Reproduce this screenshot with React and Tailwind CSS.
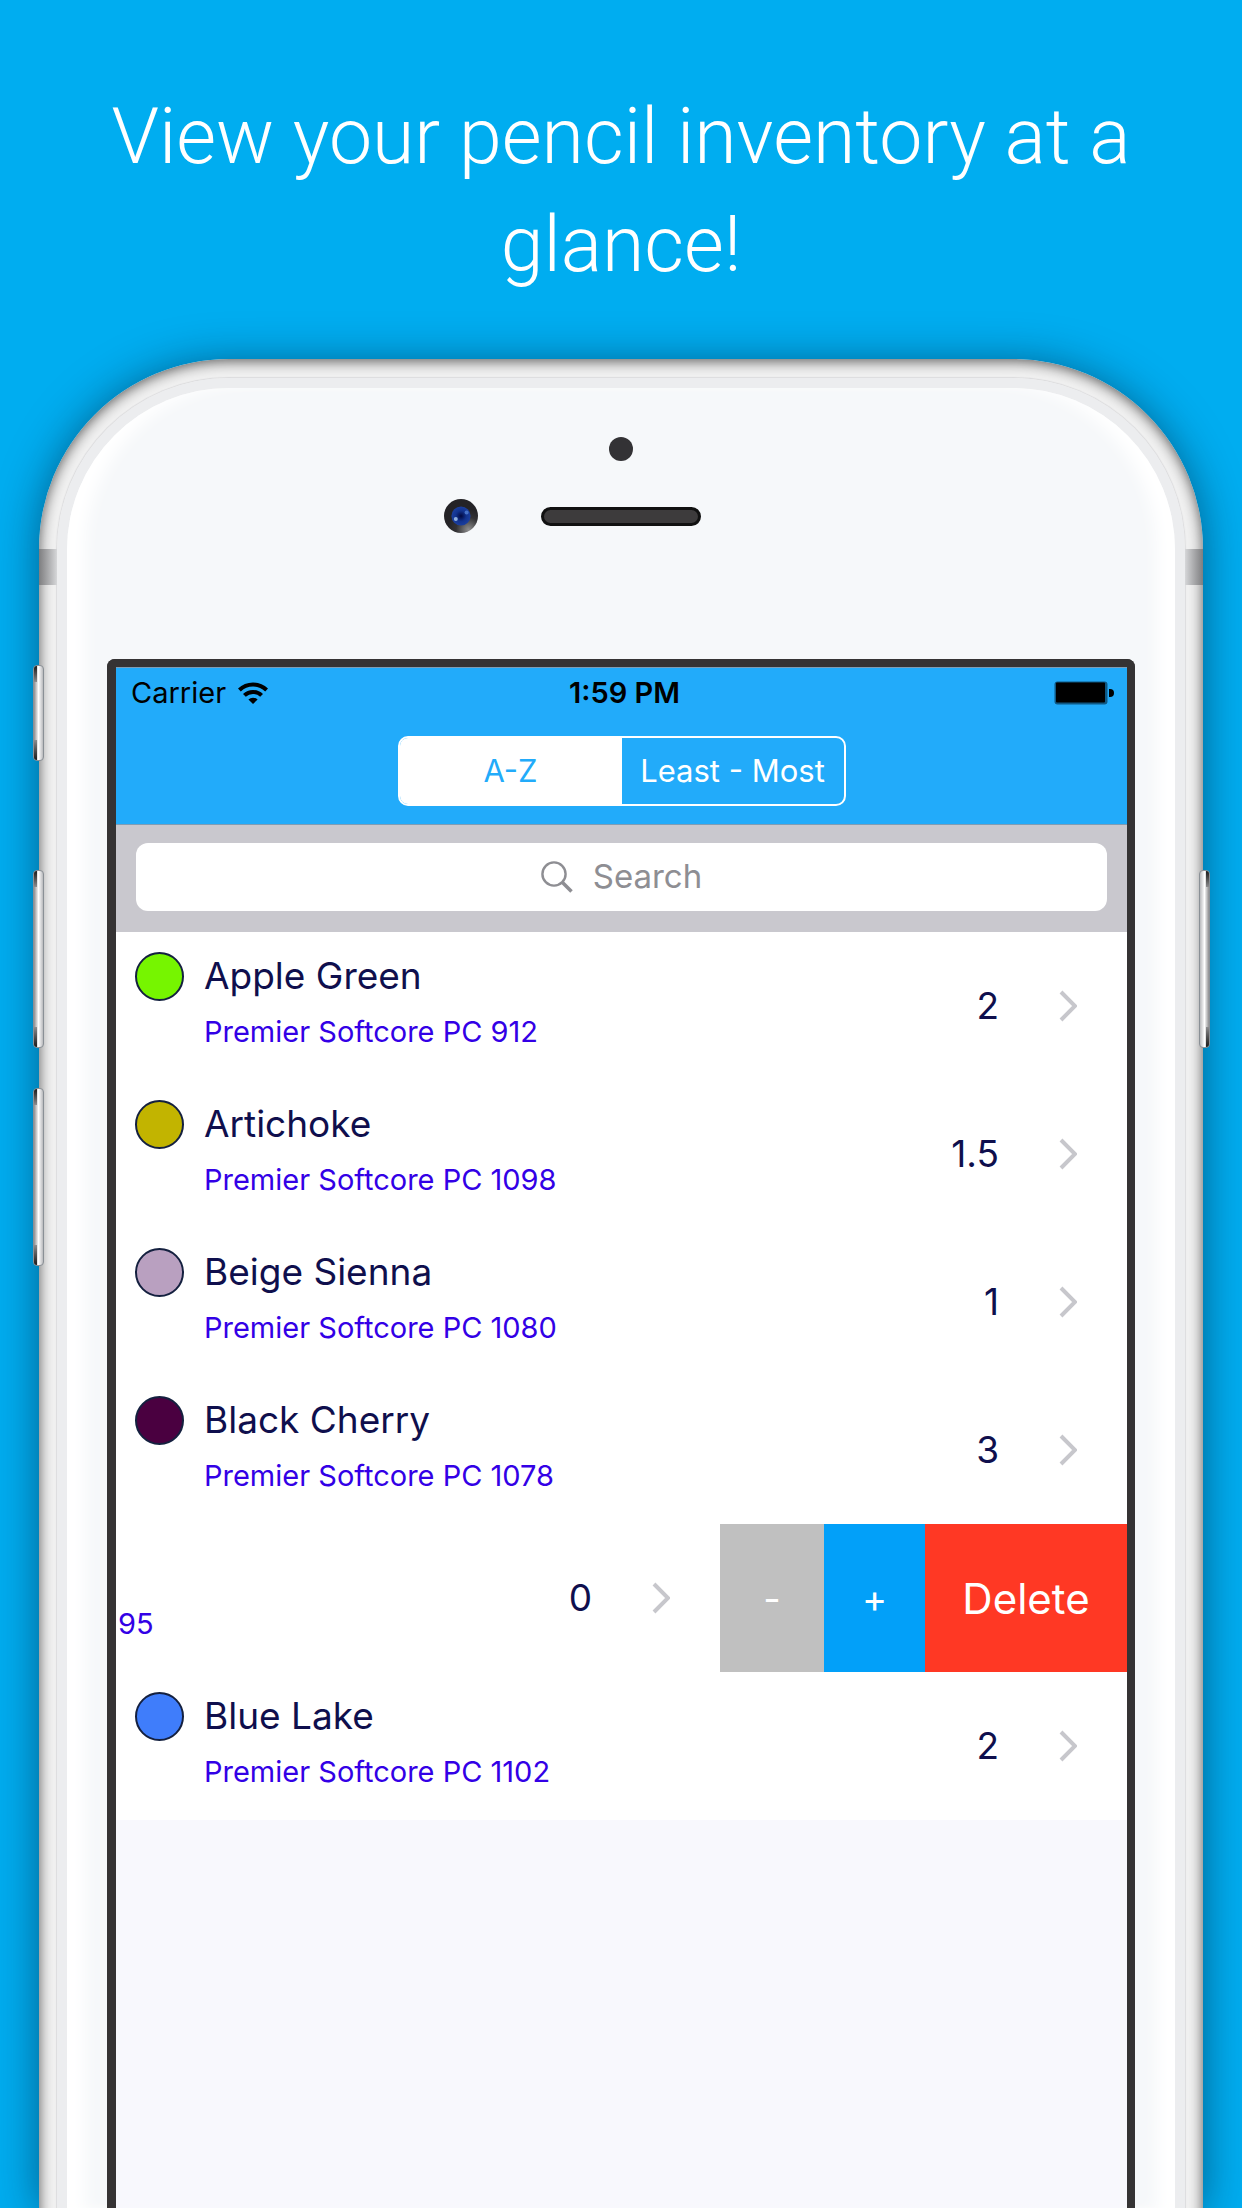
import React from "react";

const pencils = [
  { name: "Apple Green", detail: "Premier Softcore PC 912", count: "2", swatch: "bg-[#76f500]" },
  { name: "Artichoke", detail: "Premier Softcore PC 1098", count: "1.5", swatch: "bg-[#c2b400]" },
  { name: "Beige Sienna", detail: "Premier Softcore PC 1080", count: "1", swatch: "bg-[#b9a0c0]" },
  { name: "Black Cherry", detail: "Premier Softcore PC 1078", count: "3", swatch: "bg-[#4a0040]" },
  { detail: "95", count: "0", swiped: true },
  { name: "Blue Lake", detail: "Premier Softcore PC 1102", count: "2", swatch: "bg-[#3f7dfb]" },
];

function Chevron() {
  return (
    <svg aria-hidden="true" viewBox="0 0 18 32" className="h-8 w-[18px] shrink-0" fill="none" stroke="#c7c7cc" strokeWidth="4">
      <path d="M2 2 L16 16 L2 30" />
    </svg>
  );
}

function Wifi() {
  return (
    <svg aria-hidden="true" viewBox="0 0 30 22" className="h-[22px] w-[30px]">
      <g fill="none" stroke="#000" strokeWidth="4">
        <path d="M1.4 8 A19.5 19.5 0 0 1 28.6 8" />
        <path d="M6.4 13.4 A12.4 12.4 0 0 1 23.6 13.4" />
      </g>
      <path d="M15 22 L10.4 17.6 A6.6 6.6 0 0 1 19.6 17.6 Z" />
    </svg>
  );
}

function Battery() {
  return (
    <svg aria-hidden="true" viewBox="0 0 60 24" className="h-6 w-[60px]">
      <rect x="0.5" y="0.5" width="53" height="23" rx="3" fill="#0e5884" />
      <rect x="2" y="1.5" width="49" height="20" rx="1" />
      <path d="M55 8 h1 a4 4 0 0 1 0 8 h-1 z" />
    </svg>
  );
}

function SearchIcon() {
  return (
    <svg aria-hidden="true" viewBox="0 0 32 32" className="h-8 w-8 shrink-0" fill="none" stroke="#8e8e93">
      <circle cx="13" cy="13" r="11.6" strokeWidth="2.4" />
      <path d="M21 21 L30.5 30.5" strokeWidth="3.6" />
    </svg>
  );
}

function Camera() {
  return (
    <svg aria-hidden="true" viewBox="0 0 34 34" className="h-[34px] w-[34px]">
      <defs>
        <radialGradient id="rim" cx="0.72" cy="0.9" r="0.6">
          <stop offset="0" stopColor="#8f8f8f" />
          <stop offset="0.6" stopColor="#333235" />
          <stop offset="1" stopColor="#242326" />
        </radialGradient>
        <radialGradient id="lens" cx="0.5" cy="0.5" r="0.5">
          <stop offset="0" stopColor="#02093f" />
          <stop offset="0.55" stopColor="#12338f" />
          <stop offset="1" stopColor="#1b3f9f" />
        </radialGradient>
      </defs>
      <circle cx="17" cy="17" r="17" fill="url(#rim)" />
      <circle cx="17" cy="17" r="9.6" fill="url(#lens)" />
      <circle cx="11.8" cy="20" r="2" fill="#8fb0e0" />
      <circle cx="22.6" cy="13.4" r="2" fill="#4672c8" />
    </svg>
  );
}

function SideKey({ className }) {
  return (
    <div
      aria-hidden="true"
      className={`absolute w-[11px] overflow-hidden rounded-[4px] border border-[#8a9096] bg-linear-to-r from-[#8d8d8f] via-white to-[#b9babd] ${className}`}
    >
      <div className="flex h-full flex-col justify-between">
        <div className="h-4 w-[3px] bg-linear-to-b from-[#1c1c1c] to-[#8d8d8f]" />
        <div className="h-5 w-[3px] bg-linear-to-t from-[#1c1c1c] to-[#8d8d8f]" />
      </div>
    </div>
  );
}

function PencilRow({ name, detail, count, swatch, swiped }) {
  return (
    <li className="flex h-[148px] overflow-hidden">
      <a href="#pencil" className={`flex flex-1 items-center pr-[50px] ${swiped ? "pl-[2px]" : "pl-[19px]"}`}>
        <div className="flex h-full flex-1 gap-5 pt-5">
          {swatch && <span className={`h-[49px] w-[49px] rounded-full border-2 border-[#14203f] ${swatch}`} />}
          <div className="flex flex-col gap-3">
            <span className="h-12 text-[37px] leading-[48px] text-[#0f0f4d]">{name}</span>
            <span className="text-[29px] leading-10 text-[#3300e6]">{detail}</span>
          </div>
        </div>
        <span className="mr-[60px] text-[37px] leading-[48px] text-[#0f0f4d]">{count}</span>
        <Chevron />
      </a>
      {swiped && (
        <div className="flex text-white">
          <button type="button" aria-label="Remove one" className="w-[104px] bg-[#c0c0c0] text-[38px]">-</button>
          <button type="button" aria-label="Add one" className="w-[101px] bg-[#02a0f9] text-[38px]">+</button>
          <button type="button" className="w-[202px] bg-[#ff3824] text-[42px]">Delete</button>
        </div>
      )}
    </li>
  );
}

export default function App() {
  return (
    <div className="flex h-screen min-h-[1400px] flex-col overflow-hidden bg-[#00adf0] font-['Inter',sans-serif]">
      <h1 className="px-20 pt-[83px] text-center font-['Roboto',sans-serif] text-[77px] leading-[108px] font-light text-white">
        View your pencil inventory at a glance!
      </h1>

      <div className="relative mx-[39px] mt-[60px] flex flex-1 flex-col">
        <div className="relative flex flex-1 flex-col overflow-hidden rounded-t-[190px] bg-[#f1f1f1] px-[18px] pt-[19px] shadow-[0_4px_44px_rgba(0,20,40,0.5)]">
          <div className="flex flex-1 flex-col rounded-t-[172px] border-x-[10px] border-t-[10px] border-[#ecedef] shadow-[0_0_1px_1px_#dcdcde]">
            <div className="flex flex-1 flex-col rounded-t-[162px] bg-[#f6f8fa] px-10 shadow-[inset_24px_0_16px_-6px_#fff,inset_-24px_0_16px_-6px_#fff]">
              <div className="flex h-[271px] flex-col items-center pt-[49px]" aria-hidden="true">
                <div className="h-6 w-6 rounded-full bg-[#333235]" />
                <div className="mt-[38px] grid w-full grid-cols-[1fr_160px_1fr] items-center">
                  <div className="mr-[63px] justify-self-end">
                    <Camera />
                  </div>
                  <div className="h-[19px] rounded-full border-[3px] border-[#111] bg-[#3d3b3c]" />
                </div>
              </div>

              <main className="flex flex-1 flex-col rounded-t-lg border-t-8 border-r-8 border-l-[9px] border-[#353334] bg-[#f8f8fd]">
                <header className="border-y border-[#7f9db5] bg-[#22abfa] pb-[18px]">
                  <div className="grid h-[50px] grid-cols-3 items-center pr-[13px] pl-[15px] text-[29px] leading-[36px] text-black">
                    <div className="flex items-center gap-3">
                      <span>Carrier</span>
                      <Wifi />
                    </div>
                    <span className="pl-1 text-center font-semibold">1:59 PM</span>
                    <div className="justify-self-end">
                      <Battery />
                    </div>
                  </div>
                  <div className="mx-auto mt-[18px] flex h-[70px] w-[448px] overflow-hidden rounded-[10px] border-2 border-white text-[31px]">
                    <button type="button" className="flex-1 bg-white text-[#22abfa]">A-Z</button>
                    <button type="button" className="flex-1 text-white">Least - Most</button>
                  </div>
                </header>

                <div className="bg-[#c9c8ce] px-5 pt-[18px] pb-[21px]">
                  <label className="flex h-[68px] items-center justify-center gap-5 rounded-[12px] bg-white text-[33px]">
                    <SearchIcon />
                    <input
                      type="search"
                      aria-label="Search"
                      placeholder="Search"
                      className="field-sizing-content outline-none placeholder:text-[#8e8e93]"
                    />
                  </label>
                </div>

                <ul className="bg-white">
                  {pencils.map((p) => (
                    <PencilRow key={p.detail} {...p} />
                  ))}
                </ul>
              </main>
            </div>
          </div>
          <div className="pointer-events-none absolute inset-x-0 top-0 -bottom-8 rounded-t-[190px] shadow-[inset_0_2px_14px_rgba(0,0,0,0.65)]" />
          <div className="absolute top-[190px] left-0 h-9 w-[18px] bg-linear-to-r from-[#7e7e80] to-[#d6d7d9]" />
          <div className="absolute top-[190px] right-0 h-9 w-[18px] bg-linear-to-l from-[#7e7e80] to-[#d6d7d9]" />
        </div>

        <SideKey className="top-[306px] -left-[6px] h-[96px]" />
        <SideKey className="top-[511px] -left-[6px] h-[178px]" />
        <SideKey className="top-[729px] -left-[6px] h-[178px]" />
        <SideKey className="top-[511px] -right-[7px] h-[178px] -scale-x-100" />
      </div>
    </div>
  );
}
